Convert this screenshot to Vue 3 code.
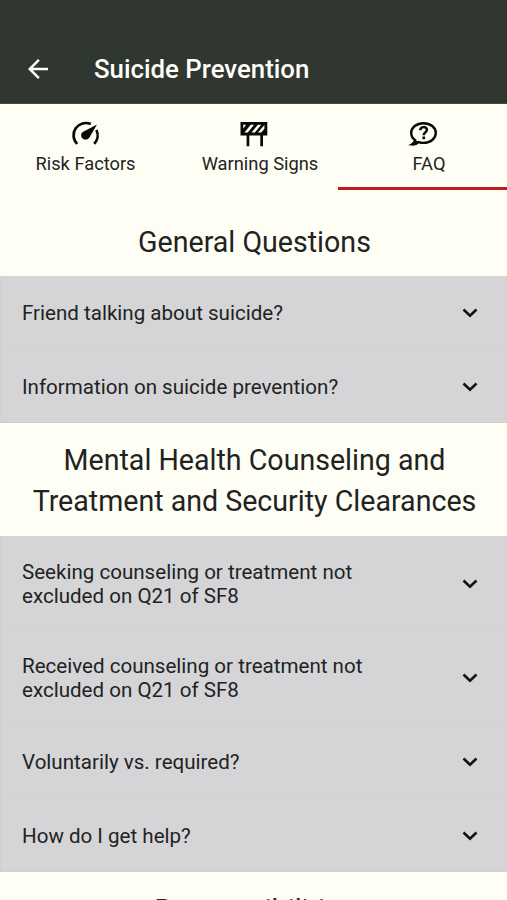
<template>
  <div class="app-screen">
    <header class="app-header">
      <button class="back-btn" aria-label="Back">
        <svg width="30" height="30" viewBox="0 0 24 24">
          <path d="M20 11H7.83l5.59-5.59L12 4l-8 8 8 8 1.41-1.41L7.83 13H20v-2z" fill="currentColor" />
        </svg>
      </button>
      <h1 class="app-title">Suicide Prevention</h1>
    </header>

    <nav class="tabs">
      <button
        v-for="tab in tabs"
        :key="tab.id"
        class="tab"
        :class="[tab.id, { active: activeTab === tab.id }]"
        @click="activeTab = tab.id"
      >
        <!-- Gauge -->
        <svg v-if="tab.id === 'risk'" class="tab-icon" viewBox="0 0 30 28">
          <g fill="none" stroke="currentColor" stroke-width="2.7">
            <path d="M7.2 23.9A12.200 12.200 0 0 1 20.800 4.100" />
            <path d="M26.400 10A12.200 12.200 0 0 1 24.200 23.900" />
          </g>
          <path d="M27 4.4L19.6 17.2C18.2 19.8 14.4 20.4 12.3 18.3C10.2 16.1 11 12.7 13.7 11.5Z" fill="currentColor" />
        </svg>
        <!-- Road barrier -->
        <svg v-else-if="tab.id === 'warning'" class="tab-icon" viewBox="0 0 30 28">
          <path fill="currentColor" d="M1.5 2h26.8v13.400H24v10.800h-2.700V15.400h-11v10.800H7.600V15.400H1.500z" />
          <path fill="#fffef4" d="M4.200 4.800h3L4.200 8.600zM11.700 4.800h3.400L8.800 12.600H5.400zM18.800 4.800h3.400l-6.300 7.800h-3.400zM25.400 5v3.800l-3.100 3.800h-3.400z" />
        </svg>
        <!-- Speech bubble with a question mark -->
        <svg v-else class="tab-icon" viewBox="0 0 30 28">
          <path
            d="M15.500 3.200C8.500 3.200 3.200 7.500 3.200 13c0 3.100 1.600 5.500 4 7.300-.5 1.700-1.600 3-3.300 4.100 3 .2 5.200-.8 6.800-2.300 1.500.5 3.100.8 4.800.8 7 0 12.300-4.400 12.300-9.900S22.500 3.200 15.500 3.200z"
            fill="none"
            stroke="currentColor"
            stroke-width="2.4"
          />
          <path d="M4 25.200L7.600 20.400L11 22.300Q8 25.200 4 25.200Z" fill="currentColor" />
          <path d="M12.300 10.300c0-4.300 6.600-4 6.600-.5 0 2.500-3.200 2.700-3.200 5.400" fill="none" stroke="currentColor" stroke-width="2.500" />
          <rect x="14.400" y="16.500" width="2.700" height="2.700" fill="currentColor" />
        </svg>
        <span class="tab-label">{{ tab.label }}</span>
      </button>
    </nav>

    <main>
      <section v-for="section in sections" :key="section.title" class="faq-section">
        <h2 class="section-title">{{ section.title }}</h2>
        <div class="questions">
          <button v-for="question in section.questions" :key="question" class="question-row">
            <span class="question-text">{{ question }}</span>
            <svg class="chevron" width="16" height="10" viewBox="0 0 16 10">
              <path d="M1.5 1.5L8 7.8L14.5 1.5" fill="none" stroke="currentColor" stroke-width="2.6" />
            </svg>
          </button>
        </div>
      </section>
    </main>
  </div>
</template>

<script setup>
import { ref } from 'vue';

const activeTab = ref('faq');

const tabs = [
  { id: 'risk', label: 'Risk Factors' },
  { id: 'warning', label: 'Warning Signs' },
  { id: 'faq', label: 'FAQ' }
];

const sections = [
  {
    title: 'General Questions',
    questions: ['Friend talking about suicide?', 'Information on suicide prevention?']
  },
  {
    title: 'Mental Health Counseling and Treatment and Security Clearances',
    questions: [
      'Seeking counseling or treatment not excluded on Q21 of SF8',
      'Received counseling or treatment not excluded on Q21 of SF8',
      'Voluntarily vs. required?',
      'How do I get help?'
    ]
  },
  { title: 'Responsibilities', questions: [] }
];
</script>

<style>
body {
  background: #fffef4;
}
</style>

<style scoped>
.app-screen {
  height: 900px;
  overflow: hidden;
  background: #fffef4;
  color: #212323;
  font-family: Roboto, sans-serif;
}

button {
  padding: 0;
  border: none;
  background: none;
  color: inherit;
  font-family: inherit;
  cursor: pointer;
}

.app-header {
  display: flex;
  align-items: center;
  box-sizing: border-box;
  height: 104px;
  padding: 35px 23px 0;
  background: #303630;
  border-bottom: 1px solid #454b43;
  color: #fffef8;
}

.back-btn {
  display: flex;
}

.app-title {
  margin: 0 0 0 41px;
  font-size: 25.8px;
  font-weight: 500;
  line-height: 30px;
}

.tabs {
  display: flex;
  height: 86px;
}

.tab {
  flex: 1;
  display: flex;
  flex-direction: column;
  align-items: center;
  box-sizing: border-box;
  padding-top: 16px;
  border-bottom: 3px solid transparent;
}

.tab.active {
  border-bottom-color: #c41a1b;
}

.tab-icon {
  width: 30px;
  height: 28px;
  color: #080a08;
}

.tab-label {
  margin-top: 5px;
  font-size: 18.3px;
  line-height: 22px;
}

.risk .tab-label {
  margin-left: 2px;
}

.warning .tab-label,
.faq .tab-label {
  margin-left: 13px;
}

.section-title {
  margin: 0;
  padding: 17px 19px 14.2px 21px;
  font-size: 28.6px;
  font-weight: 400;
  line-height: 41px;
  text-align: center;
}

.faq-section:first-child .section-title {
  padding-top: 32px;
  padding-bottom: 12.5px;
}

.faq-section:last-child .section-title {
  padding-top: 17.6px;
}

.questions {
  background: #d5d5d7;
}

.question-row {
  display: flex;
  align-items: center;
  justify-content: space-between;
  box-sizing: border-box;
  width: 100%;
  min-height: 73.6px;
  padding: 24px 28px 21.5px 21px;
  border: 1px solid #cfd0d1;
  border-width: 0 1px 1px;
  text-align: left;
}

.question-text {
  width: 360px;
  font-size: 20.57px;
  line-height: 24px;
}

.chevron {
  flex: none;
  color: #111313;
}
</style>
